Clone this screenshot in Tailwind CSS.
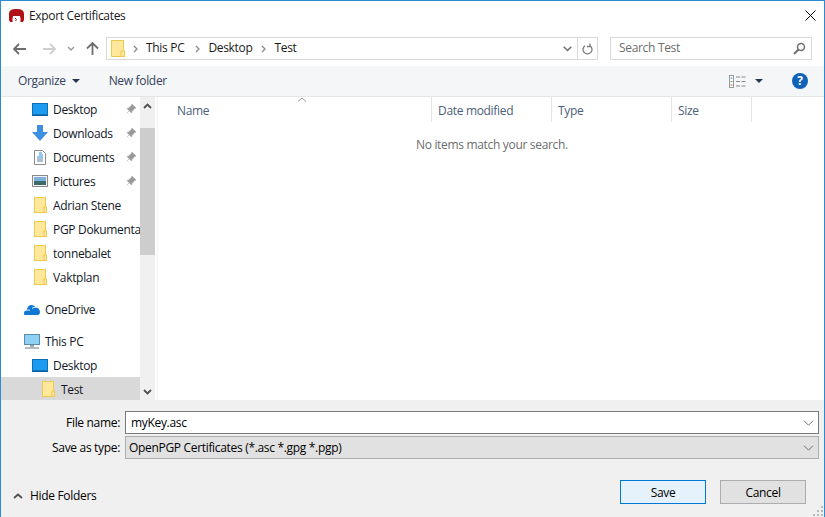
<!DOCTYPE html>
<html>
<head>
<meta charset="utf-8">
<script src="https://cdn.jsdelivr.net/npm/@tailwindcss/browser@4"></script>
</head>
<body class="m-0 bg-white">
<div class="w-[825px] h-[517px] flex flex-col overflow-hidden border-x border-t border-[#2a8ad4] bg-white text-[12px] leading-4 text-black font-['Open_Sans','Noto_Sans',sans-serif] tracking-[-0.32px]">

  <!-- title bar -->
  <div class="h-[29px] flex items-center shrink-0">
    <svg class="ml-[8px] w-[15px] h-[15px]" viewBox="0 0 15 15"><path d="M0 12V6C0 2 3 1 7.500 1S15 2 15 6v6l-1 2h-2.500V9.500h-8V14H1z" fill="#b01116"/><rect x="4" y="8" width="7" height="6" fill="#fff"/><path d="M6 10l1.500 1.500L6.500 13" stroke="#b01116" fill="none"/></svg>
    <span class="ml-[5px] text-[#1a1a1a]">Export Certificates</span>
    <svg class="ml-auto mr-[8px] w-[11px] h-[11px]" viewBox="0 0 11 11"><path d="M.5.5l10 10M10.500.5l-10 10" stroke="#000" stroke-width="1" fill="none"/></svg>
  </div>

  <!-- nav row -->
  <div class="h-[36px] flex items-start shrink-0 pt-[7px]">
    <div class="w-[105px] h-[23px] flex items-center shrink-0">
      <svg class="ml-[12px] w-[13px] h-[12px]" viewBox="0 0 13 12"><path d="M6 1L1 6l5 5M1 6h12" stroke="#6e6e6e" stroke-width="1.800" fill="none"/></svg>
      <svg class="ml-[17px] w-[13px] h-[12px]" viewBox="0 0 13 12"><path d="M7 1l5 5-5 5M12 6H0" stroke="#cfcfcf" stroke-width="1.800" fill="none"/></svg>
      <svg class="ml-[11px] w-[8px] h-[6px]" viewBox="0 0 8 6"><path d="M1 1l3 3 3-3" stroke="#9a9a9a" stroke-width="1.500" fill="none"/></svg>
      <svg class="ml-[11px] w-[13px] h-[13px]" viewBox="0 0 13 13"><path d="M1 6.500l5.500-5.500 5.500 5.500M6.500 1v12" stroke="#6e6e6e" stroke-width="1.800" fill="none"/></svg>
    </div>
    <div class="w-[492px] h-[23px] flex items-center border border-[#d9d9d9] shrink-0">
      <svg class="ml-[4px] w-[14px] h-[17px]" viewBox="0 0 14 17"><rect x=".5" y=".5" width="12" height="16" fill="#ffe79c" stroke="#eec94f"/><rect x="10" y="11" width="3.500" height="5.500" fill="#ffe79c" stroke="#eec94f"/></svg>
      <svg class="ml-[8px] w-[5px] h-[8px]" viewBox="0 0 5 8"><path d="M1 1l3 3-3 3" stroke="#8c8c8c" stroke-width="1.300" fill="none"/></svg>
      <span class="ml-[8px] mb-[2px] text-[#1a1a1a]">This PC</span>
      <svg class="ml-[11px] w-[5px] h-[8px]" viewBox="0 0 5 8"><path d="M1 1l3 3-3 3" stroke="#8c8c8c" stroke-width="1.300" fill="none"/></svg>
      <span class="ml-[8px] mb-[2px] text-[#1a1a1a]">Desktop</span>
      <svg class="ml-[9px] w-[5px] h-[8px]" viewBox="0 0 5 8"><path d="M1 1l3 3-3 3" stroke="#8c8c8c" stroke-width="1.300" fill="none"/></svg>
      <span class="ml-[8px] mb-[2px] text-[#1a1a1a]">Test</span>
      <svg class="ml-auto mr-[5px] w-[9px] h-[6px]" viewBox="0 0 9 6"><path d="M.7.7L4.500 4.500 8.300.7" stroke="#6e6e6e" stroke-width="1.500" fill="none"/></svg>
      <div class="w-[20px] h-full border-l border-[#d9d9d9] flex items-center justify-center">
        <svg class="w-[11px] h-[12px]" viewBox="0 0 11 12"><path d="M3 2.700A4.500 4.500 0 1 0 8 2.700M8 .5v3H4.900" stroke="#7a7a7a" stroke-width="1.300" fill="none"/></svg>
      </div>
    </div>
    <div class="ml-[12px] w-[202px] h-[23px] flex items-center border border-[#d9d9d9] shrink-0">
      <span class="ml-[8px] mb-[2px] text-[#6d6d6d]">Search Test</span>
      <svg class="ml-auto mr-[5px] w-[13px] h-[13px]" viewBox="0 0 13 13"><circle cx="8" cy="5" r="3.500" stroke="#6e6e6e" stroke-width="1.500" fill="none"/><path d="M5.500 7.500L1 12" stroke="#6e6e6e" stroke-width="2" fill="none"/></svg>
    </div>
  </div>

  <!-- toolbar -->
  <div class="h-[31px] flex items-center bg-[#f5f6f7] border-b border-[#e6e6e6] shrink-0 text-[#33415c]">
    <span class="ml-[17px]">Organize</span>
    <svg class="ml-[6px] w-[8px] h-[4px]" viewBox="0 0 8 4"><path d="M0 0h8L4 4z" fill="#26374f"/></svg>
    <span class="ml-[29px]">New folder</span>
    <svg class="ml-auto w-[17px] h-[13px]" viewBox="0 0 17 13"><rect x=".5" y=".5" width="4" height="12" fill="#fff" stroke="#9a9a9a"/><path d="M1.500 3h2" stroke="#4a90d9"/><path d="M1.500 6.500h2" stroke="#58a55c"/><path d="M1.500 10h2" stroke="#d9534f"/><path d="M7 2h4M12.500 2h4M7 6.500h4M12.500 6.500h4M7 11h4M12.500 11h4" stroke="#8a8a8a"/></svg>
    <svg class="ml-[9px] w-[8px] h-[4px]" viewBox="0 0 8 4"><path d="M0 0h8L4 4z" fill="#26374f"/></svg>
    <div class="ml-[29px] mr-[16px] w-[16px] h-[16px] rounded-full bg-[#0f62b8] flex items-center justify-center text-white text-[12px] font-bold">?</div>
  </div>

  <!-- main -->
  <div class="h-[303px] flex shrink-0 overflow-hidden">
    <div class="w-[139px] shrink-0 overflow-hidden text-[#111827]">
      <div class="h-6 flex items-center pl-[31px]">
        <svg class="w-[16px] h-[13px] shrink-0" viewBox="0 0 16 13"><rect x=".5" y=".5" width="15" height="12" fill="#1c9cf0" stroke="#0a6fb5"/><path d="M1 12h14" stroke="#0a4f85"/></svg>
        <span class="ml-[5px] pt-[2px] whitespace-nowrap">Desktop</span>
        <svg class="ml-auto mr-[4px] w-[10px] h-[10px]" viewBox="0 0 10 10"><path d="M6 0l4 4-1.500.5L6 7.500 5.500 9 1 4.500 2.500 4 5.500 1.500zM3 7L.5 9.500" fill="#9a9a9a" stroke="#9a9a9a" stroke-width=".5"/></svg>
      </div>
      <div class="h-6 flex items-center pl-[31px]">
        <svg class="w-[16px] h-[16px] shrink-0" viewBox="0 0 16 16"><path d="M5 0h6v7h5l-8 9-8-9h5z" fill="#3d8fe0"/></svg>
        <span class="ml-[5px] pt-[2px] whitespace-nowrap">Downloads</span>
        <svg class="ml-auto mr-[4px] w-[10px] h-[10px]" viewBox="0 0 10 10"><path d="M6 0l4 4-1.500.5L6 7.500 5.500 9 1 4.500 2.500 4 5.500 1.500zM3 7L.5 9.500" fill="#9a9a9a" stroke="#9a9a9a" stroke-width=".5"/></svg>
      </div>
      <div class="h-6 flex items-center pl-[33px]">
        <svg class="w-[12px] h-[15px] shrink-0" viewBox="0 0 12 15"><path d="M.5.5h8l3 3v11H.5z" fill="#fff" stroke="#8a8a8a"/><path d="M5 3h3M5 5h4M3 7h6" stroke="#2d8fdc"/><path d="M3 9h6M3 11h6" stroke="#5a7fa0"/></svg>
        <span class="ml-[7px] pt-[2px] whitespace-nowrap">Documents</span>
        <svg class="ml-auto mr-[4px] w-[10px] h-[10px]" viewBox="0 0 10 10"><path d="M6 0l4 4-1.500.5L6 7.500 5.500 9 1 4.500 2.500 4 5.500 1.500zM3 7L.5 9.500" fill="#9a9a9a" stroke="#9a9a9a" stroke-width=".5"/></svg>
      </div>
      <div class="h-6 flex items-center pl-[31px]">
        <svg class="w-[16px] h-[12px] shrink-0" viewBox="0 0 16 12"><rect x=".5" y=".5" width="15" height="11" fill="#f4f4f4" stroke="#8a8a8a"/><rect x="2" y="2" width="12" height="4" fill="#7fb2dd"/><rect x="2" y="6" width="12" height="4" fill="#3f6a6a"/></svg>
        <span class="ml-[5px] pt-[2px] whitespace-nowrap">Pictures</span>
        <svg class="ml-auto mr-[4px] w-[10px] h-[10px]" viewBox="0 0 10 10"><path d="M6 0l4 4-1.500.5L6 7.500 5.500 9 1 4.500 2.500 4 5.500 1.500zM3 7L.5 9.500" fill="#9a9a9a" stroke="#9a9a9a" stroke-width=".5"/></svg>
      </div>
      <div class="h-6 flex items-center pl-[33px]">
        <svg class="w-[13px] h-[16px] shrink-0" viewBox="0 0 13 16"><rect x=".5" y=".5" width="11" height="15" fill="#ffe79c" stroke="#eec94f"/><rect x="10" y="10" width="2.500" height="5.500" fill="#ffe79c" stroke="#eec94f"/></svg>
        <span class="ml-[6px] pt-[2px] whitespace-nowrap">Adrian Stene</span>
      </div>
      <div class="h-6 flex items-center pl-[33px]">
        <svg class="w-[13px] h-[16px] shrink-0" viewBox="0 0 13 16"><rect x=".5" y=".5" width="11" height="15" fill="#ffe79c" stroke="#eec94f"/><rect x="10" y="10" width="2.500" height="5.500" fill="#ffe79c" stroke="#eec94f"/></svg>
        <span class="ml-[6px] pt-[2px] whitespace-nowrap">PGP Dokumentasjon</span>
      </div>
      <div class="h-6 flex items-center pl-[33px]">
        <svg class="w-[13px] h-[16px] shrink-0" viewBox="0 0 13 16"><rect x=".5" y=".5" width="11" height="15" fill="#ffe79c" stroke="#eec94f"/><rect x="10" y="10" width="2.500" height="5.500" fill="#ffe79c" stroke="#eec94f"/></svg>
        <span class="ml-[6px] pt-[2px] whitespace-nowrap">tonnebalet</span>
      </div>
      <div class="h-6 flex items-center pl-[33px]">
        <svg class="w-[13px] h-[16px] shrink-0" viewBox="0 0 13 16"><rect x=".5" y=".5" width="11" height="15" fill="#ffe79c" stroke="#eec94f"/><rect x="10" y="10" width="2.500" height="5.500" fill="#ffe79c" stroke="#eec94f"/></svg>
        <span class="ml-[6px] pt-[2px] whitespace-nowrap">Vaktplan</span>
      </div>
      <div class="h-6 mt-2 flex items-center pl-[23px]">
        <svg class="w-[16px] h-[11px] shrink-0" viewBox="0 0 16 11"><path d="M0 9.500C0 7.500 1 6.500 2.500 6.500 3 3 5 1 7.500 1c2 0 3.300 1 4 2.500C14 3.500 16 5.500 16 8c0 2-1 3-2.500 3H1.500C.5 11 0 10.500 0 9.500z" fill="#0f78d4"/><path d="M2.500 6.500c1-.7 2.500-.7 3.500 0M8 4.500c1-1 2.500-1.300 3.500-1" stroke="#fff" fill="none"/></svg>
        <span class="ml-[5px] pt-[2px] whitespace-nowrap">OneDrive</span>
      </div>
      <div class="h-6 mt-2 flex items-center pl-[23px]">
        <svg class="w-[16px] h-[15px] shrink-0" viewBox="0 0 16 15"><rect x=".5" y=".5" width="15" height="10" fill="#8fd0f5" stroke="#5b8aa8"/><path d="M6 11h4v2H6z" fill="#9aa8b0"/><path d="M1 14h14" stroke="#9aa8b0" stroke-width="1.500"/></svg>
        <span class="ml-[5px] pt-[2px] whitespace-nowrap">This PC</span>
      </div>
      <div class="h-6 flex items-center pl-[31px]">
        <svg class="w-[16px] h-[13px] shrink-0" viewBox="0 0 16 13"><rect x=".5" y=".5" width="15" height="12" fill="#1c9cf0" stroke="#0a6fb5"/><path d="M1 12h14" stroke="#0a4f85"/></svg>
        <span class="ml-[5px] pt-[2px] whitespace-nowrap">Desktop</span>
      </div>
      <div class="h-6 flex items-center pl-[41px] bg-[#d9d9d9]">
        <svg class="w-[13px] h-[16px] shrink-0" viewBox="0 0 13 16"><rect x=".5" y=".5" width="11" height="15" fill="#ffe79c" stroke="#eec94f"/><rect x="10" y="10" width="2.500" height="5.500" fill="#ffe79c" stroke="#eec94f"/></svg>
        <span class="ml-[6px] pt-[2px] whitespace-nowrap">Test</span>
      </div>
    </div>

    <!-- scrollbar -->
    <div class="w-[15px] shrink-0 bg-[#f0f0f0] flex flex-col">
      <div class="h-[31px] shrink-0 flex items-start justify-center pt-[6px]">
        <svg class="w-[9px] h-[6px]" viewBox="0 0 9 6"><path d="M1 5l3.500-3.500L8 5" stroke="#505050" stroke-width="1.800" fill="none"/></svg>
      </div>
      <div class="h-[127px] shrink-0 bg-[#cdcdcd]"></div>
      <div class="flex-1"></div>
      <div class="h-[17px] shrink-0 flex items-center justify-center">
        <svg class="w-[9px] h-[6px]" viewBox="0 0 9 6"><path d="M1 1l3.500 3.500L8 1" stroke="#505050" stroke-width="1.800" fill="none"/></svg>
      </div>
    </div>

    <!-- list -->
    <div class="flex-1 min-w-0 ml-[2px] border-l border-[#f2f2f2] relative">
      <div class="h-[25px] flex text-[#4c607a]">
        <div class="w-[274px] pl-[19px] pt-[2px] flex items-center border-r border-[#e5e5e5]">Name</div>
        <div class="w-[120px] pl-[6px] pt-[2px] flex items-center border-r border-[#e5e5e5]">Date modified</div>
        <div class="w-[120px] pl-[6px] pt-[2px] flex items-center border-r border-[#e5e5e5]">Type</div>
        <div class="w-[80px] pl-[6px] pt-[2px] flex items-center border-r border-[#e5e5e5]">Size</div>
      </div>
      <svg class="absolute left-[139px] top-0 w-[10px] h-[5px]" viewBox="0 0 10 5"><path d="M1 4.500l4-3.500 4 3.500" stroke="#9a9a9a" fill="none"/></svg>
      <div class="mt-[15px] pl-[258px] text-[#6d6d6d]">No items match your search.</div>
    </div>
  </div>

  <!-- footer -->
  <div class="flex-1 bg-[#f0f0f0] relative">
    <div class="mt-[11px] flex items-center h-[23px]">
      <span class="w-[119px] text-right">File name:</span>
      <div class="ml-[5px] w-[694px] h-[23px] bg-white border border-[#7a7a7a] flex items-center pl-[5px]">
        <span>myKey.asc</span>
        <svg class="ml-auto mr-[4px] w-[11px] h-[6px]" viewBox="0 0 11 6"><path d="M1 .7l4.500 4.500L10 .7" stroke="#6e6e6e" fill="none"/></svg>
      </div>
    </div>
    <div class="mt-[2px] flex items-center h-[23px]">
      <span class="w-[119px] text-right">Save as type:</span>
      <div class="ml-[5px] w-[694px] h-[23px] bg-[#e1e1e1] border border-[#adadad] flex items-center pl-[3px]">
        <span>OpenPGP Certificates (*.asc *.gpg *.pgp)</span>
        <svg class="ml-auto mr-[4px] w-[11px] h-[6px]" viewBox="0 0 11 6"><path d="M1 .7l4.500 4.500L10 .7" stroke="#6e6e6e" fill="none"/></svg>
      </div>
    </div>
    <div class="mt-[21px] flex items-start h-[24px]">
      <div class="flex items-center h-[32px] pl-[12px]">
        <svg class="w-[10px] h-[6px]" viewBox="0 0 10 6"><path d="M1 5l4-3.500L9 5" stroke="#505050" stroke-width="1.800" fill="none"/></svg>
        <span class="ml-[7px]">Hide Folders</span>
      </div>
      <div class="ml-auto mr-[18px] flex gap-[14px]">
        <div class="w-[86px] h-[24px] pt-[2px] bg-[#e5f1fb] border border-[#0078d7] flex items-center justify-center">Save</div>
        <div class="w-[86px] h-[24px] pt-[2px] bg-[#e1e1e1] border border-[#adadad] flex items-center justify-center">Cancel</div>
      </div>
    </div>
    <svg class="absolute right-[1px] bottom-[1px] w-[10px] h-[10px]" viewBox="0 0 10 10"><path d="M8 0h2v2H8zM4 4h2v2H4zM8 4h2v2H8zM0 8h2v2H0zM4 8h2v2H4zM8 8h2v2H8z" fill="#b8b8b8"/></svg>
  </div>
</div>
</body>
</html>
